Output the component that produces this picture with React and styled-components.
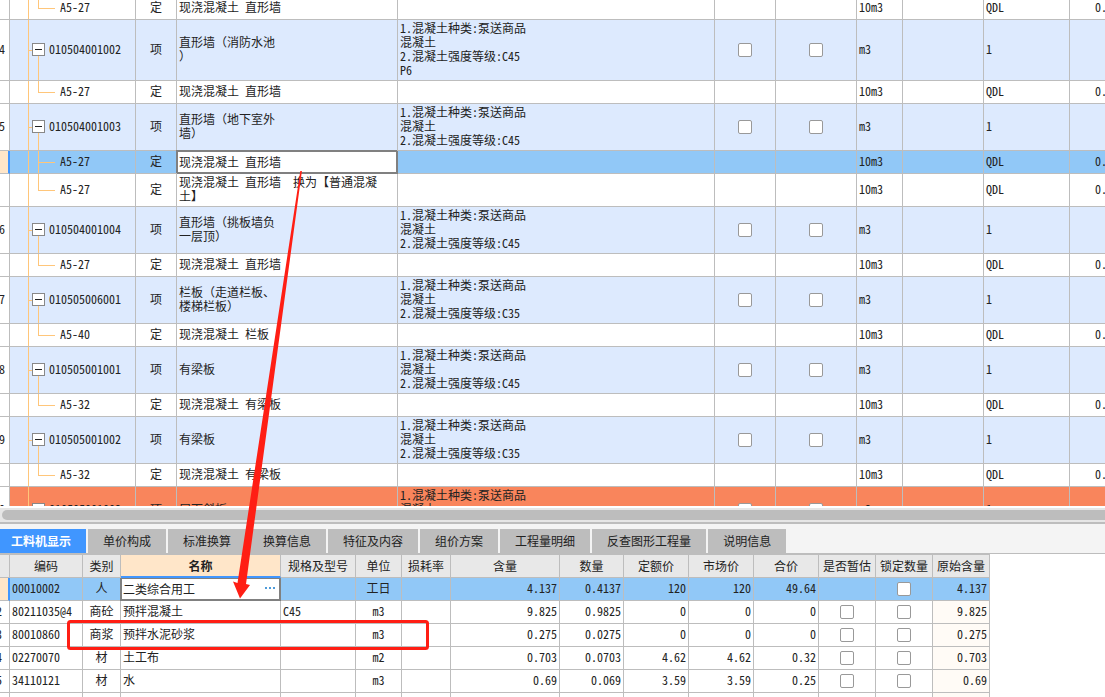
import React from 'react'
import styled, { createGlobalStyle, css } from 'styled-components'

const line = '#bdbdbd'
const ink = '#222222'
const accent = '#4096ff'
const selected = '#91c8f7'
const peach = '#ffe6c9'
const branch = '#ffc67a'

const GlobalStyle = createGlobalStyle`
* {
    box-sizing: border-box;
}
body {
    margin: 0;
    background: #fff;
    overflow: hidden;
}
body, button, input {
    font-family: "Noto Sans CJK SC", sans-serif;
    font-size: 12px;
    line-height: 14px;
    color: ${ink};
}
`

const Page = styled.div`
position: relative;
display: flex;
flex-direction: column;
height: 100vh;
overflow: hidden;
`

const BillPane = styled.main`
flex: 1;
min-height: 0;
overflow: hidden;
`

const Grid = styled.table`
table-layout: fixed;
border-collapse: separate;
border-spacing: 0;
font-feature-settings: "hwid" 1;
text-spacing-trim: space-all;
`

const BillGrid = styled(Grid)`
width: 100%;
margin-top: -3px;
`

const Col = styled.col`
width: ${(p) => (p.$w ? p.$w + 'px' : 'auto')};
`

const Cell = styled.td`
padding: 0 2px 2px 2px;
border-right: 1px solid ${line};
border-bottom: 1px solid ${line};
text-align: ${(p) => p.$align || 'left'};
vertical-align: middle;
white-space: pre;
overflow: hidden;
${(p) => p.$tint && css`
    background: #fffbf6;
`}
`

const CheckCell = styled(Cell)`
padding: 0;
`

const EdgeCell = styled(Cell)`
padding: 0 0 2px 25px;
border-right: 0;
`

// brackets stay full width while the latin text is half width
const Wide = styled.span`
font-feature-settings: normal;
`

const IndexCell = styled.th`
padding: 0 0 2px;
border-right: 1px solid ${line};
border-bottom: 1px solid ${line};
background: #fff;
font-weight: normal;
text-align: left;
text-indent: ${(p) => (p.$cut ? '-4px' : '-1px')};
white-space: nowrap;
overflow: hidden;
${(p) => p.$active && css`
    background: ${peach};
    border-right: 2px solid ${accent};
`}
`

const rowColors = {
    item: '#ddeafe',
    quota: '#ffffff',
    active: selected,
    warn: '#f9855c',
}

const BillRow = styled.tr`
background: ${(p) => rowColors[p.$kind]};
& > * {
    height: ${(p) => (p.$lines > 1 ? p.$lines * 14 + 5 : 23)}px;
}
`

const EditCell = styled(Cell)`
padding: 0 5px 2px 2px;
background: #fff;
overflow: visible;
border-color: #808080;
box-shadow: -1px -1px 0 #808080, inset 1px 1px 0 #808080, inset -1px -1px 0 #808080;
${(p) => p.$underHead && css`
    box-shadow: -1px 0 0 #808080, inset 1px 1px 0 #808080, inset -1px -1px 0 #808080;
`}
`

const EditBox = styled.div`
display: flex;
align-items: center;
`

const EditInput = styled.input`
flex: 1;
min-width: 0;
height: 16px;
padding: 0;
border: 0;
outline: 0;
background: transparent;
font-feature-settings: "hwid" 1;
`

const MoreButton = styled.button`
display: flex;
gap: 2px;
padding: 4px 0;
border: 0;
background: transparent;
i {
    width: 2px;
    height: 2px;
    background: #4f9bd9;
}
`

const TreeCell = styled(Cell)`
padding: 0;
`

const Tree = styled.div`
display: flex;
align-items: center;
height: ${(p) => (p.$lines > 1 ? p.$lines * 14 + 4 : 22)}px;
`

const Rail = styled.span`
width: 19px;
height: 100%;
border-right: 1px solid ${branch};
`

const Stub = styled.span`
width: 3px;
height: 1px;
background: ${branch};
`

const Node = styled.span`
display: flex;
flex-direction: column;
align-items: center;
height: 100%;
margin-right: 4px;
`

const NodeLine = styled.span`
flex: 1 1 ${(p) => (p.$on ? '1px' : '0px')};
width: 1px;
background: ${(p) => (p.$on ? branch : 'transparent')};
`

const Toggle = styled.button`
display: flex;
align-items: center;
justify-content: center;
width: 13px;
height: 13px;
padding: 0;
border: 1px solid #888;
background: #fff;
&::before {
    content: '';
    width: 7px;
    height: 1px;
    background: #222;
}
`

const Elbow = styled.span`
display: flex;
flex-direction: column;
width: 17px;
height: 100%;
margin-left: 9px;
margin-right: 5px;
&::before {
    content: '';
    flex: 1;
    border-left: 1px solid ${branch};
    border-bottom: 1px solid ${branch};
}
&::after {
    content: '';
    flex: 1;
    border-left: 1px solid ${(p) => (p.$last ? 'transparent' : branch)};
}
`

const Code = styled.span`
padding-bottom: 2px;
`

const Check = styled.input`
appearance: none;
display: block;
width: 14px;
height: 14px;
margin: 0 auto;
border: 1px solid #999;
border-radius: 2px;
background: #fff;
`

const ScrollTrack = styled.div`
padding: 2px 0 2px 2px;
margin-top: 2px;
background: #e6e6e6;
`

const ScrollThumb = styled.div`
height: 10px;
border-radius: 5px 0 0 5px;
background: ${line};
`

const Dock = styled.section`
height: 175px;
border-top: 2px solid ${line};
overflow: hidden;
`

const TabBar = styled.nav`
display: flex;
align-items: flex-end;
gap: 2px;
height: 30px;
background: #f4f4f4;
border-bottom: 1px solid ${line};
`

const Tab = styled.button`
height: 24px;
padding: 0 15px;
border: 0;
background: ${line};
white-space: nowrap;
${(p) => p.$active && css`
    padding-left: 11px;
    background: ${accent};
    color: #fff;
    font-weight: bold;
`}
`

const ResourceGrid = styled(Grid)`
width: 990px;
border-top: 1px solid ${line};
`

const HeadCell = styled.th`
height: 23px;
padding: 0;
border-right: 1px solid ${line};
border-bottom: 1px solid ${line};
background: #e8e8e8;
font-weight: normal;
white-space: nowrap;
${(p) => p.$active && css`
    background: ${peach};
    border-bottom: 2px solid ${accent};
    font-weight: bold;
`}
`

const Marks = styled.svg`
position: absolute;
top: 0;
left: 0;
pointer-events: none;
`

const concrete = (grade) => `1.混凝土种类:泵送商品\n混凝土\n2.混凝土强度等级:${grade}`

const billCols = [10, 126, 41, 221, 317, 61, 81, 46, 81, 86, 0]

const bill = [
    { kind: 'quota', code: 'A5-27', name: '现浇混凝土 直形墙', last: true },
    { kind: 'item', no: '4', code: '010504001002', name: '直形墙（消防水池\n）', desc: concrete('C45\nP6'), lines: 4 },
    { kind: 'quota', code: 'A5-27', name: '现浇混凝土 直形墙', last: true },
    { kind: 'item', no: '5', code: '010504001003', name: '直形墙（地下室外\n墙）', desc: concrete('C45'), lines: 3 },
    { kind: 'active', code: 'A5-27', name: '现浇混凝土 直形墙' },
    { kind: 'quota', code: 'A5-27', name: '现浇混凝土 直形墙  换为【普通混凝\n土】', last: true, lines: 2 },
    { kind: 'item', no: '6', code: '010504001004', name: '直形墙（挑板墙负\n一层顶）', desc: concrete('C45'), lines: 3 },
    { kind: 'quota', code: 'A5-27', name: '现浇混凝土 直形墙', last: true },
    { kind: 'item', no: '7', code: '010505006001', name: '栏板（走道栏板、\n楼梯栏板）', desc: concrete('C35'), lines: 3 },
    { kind: 'quota', code: 'A5-40', name: '现浇混凝土 栏板', last: true },
    { kind: 'item', no: '8', code: '010505001001', name: '有梁板', desc: concrete('C45'), lines: 3 },
    { kind: 'quota', code: 'A5-32', name: '现浇混凝土 有梁板', last: true },
    { kind: 'item', no: '9', code: '010505001002', name: '有梁板', desc: concrete('C35'), lines: 3 },
    { kind: 'quota', code: 'A5-32', name: '现浇混凝土 有梁板', last: true },
    { kind: 'warn', no: '0', code: '010505001003', name: '屋面斜板', desc: concrete('C35'), lines: 3 },
]

const tabs = ['工料机显示', '单价构成', '标准换算', '换算信息', '特征及内容', '组价方案', '工程量明细', '反查图形工程量', '说明信息']

const resCols = [10, 73, 38, 160, 75, 46, 49, 109, 64, 65, 65, 65, 57, 57, 57]

const heads = ['', '编码', '类别', '名称', '规格及型号', '单位', '损耗率', '含量', '数量', '定额价', '市场价', '合价', '是否暂估', '锁定数量', '原始含量']

const resources = [
    { code: '00010002', type: '人', name: '二类综合用工', unit: '工日', nums: ['4.137', '0.4137', '120', '120', '49.64'], origin: '4.137', active: true },
    { no: '2', code: '80211035@4', type: '商砼', name: '预拌混凝土', spec: 'C45', unit: 'm3', nums: ['9.825', '0.9825', '0', '0', '0'], origin: '9.825' },
    { no: '3', code: '80010860', type: '商浆', name: '预拌水泥砂浆', unit: 'm3', nums: ['0.275', '0.0275', '0', '0', '0'], origin: '0.275' },
    { no: '4', code: '02270070', type: '材', name: '土工布', unit: 'm2', nums: ['0.703', '0.0703', '4.62', '4.62', '0.32'], origin: '0.703' },
    { no: '5', code: '34110121', type: '材', name: '水', unit: 'm3', nums: ['0.69', '0.069', '3.59', '3.59', '0.25'], origin: '0.69' },
]

function Name({ text }) {
    return text.split(/([（）])/).map((part, i) => (
        i % 2 ? <Wide key={i}>{part}</Wide> : part
    ))
}

function BillLine({ row }) {
    const isItem = row.kind === 'item' || row.kind === 'warn'
    const lines = row.lines || 1
    return (
        <BillRow $kind={row.kind} $lines={lines}>
            <IndexCell scope="row" $active={row.kind === 'active'}>{row.no}</IndexCell>
            <TreeCell>
                <Tree $lines={lines}>
                    <Rail />
                    {isItem ? (
                        <>
                            <Stub />
                            <Node>
                                <NodeLine />
                                <Toggle aria-label={'收起 ' + row.code} />
                                <NodeLine $on />
                            </Node>
                        </>
                    ) : (
                        <Elbow $last={row.last} />
                    )}
                    <Code>{row.code}</Code>
                </Tree>
            </TreeCell>
            <Cell $align="center">{isItem ? '项' : '定'}</Cell>
            {row.kind === 'active' ? (
                <EditCell>
                    <EditBox>
                        <EditInput aria-label="名称" defaultValue={row.name} />
                    </EditBox>
                </EditCell>
            ) : (
                <Cell><Name text={row.name} /></Cell>
            )}
            <Cell>{row.desc}</Cell>
            <CheckCell>{isItem && <Check type="checkbox" aria-label={row.code + ' 选项一'} />}</CheckCell>
            <CheckCell>{isItem && <Check type="checkbox" aria-label={row.code + ' 选项二'} />}</CheckCell>
            <Cell>{isItem ? 'm3' : '10m3'}</Cell>
            <Cell />
            <Cell>{isItem ? '1' : 'QDL'}</Cell>
            <EdgeCell>{isItem ? '' : '0.'}</EdgeCell>
        </BillRow>
    )
}

function ResourceLine({ row }) {
    return (
        <BillRow $kind={row.active ? 'active' : 'quota'}>
            <IndexCell scope="row" $cut $active={row.active}>{row.no}</IndexCell>
            <Cell>{row.code}</Cell>
            <Cell $align="center">{row.type}</Cell>
            {row.active ? (
                <EditCell $underHead>
                    <EditBox>
                        <EditInput aria-label="名称" defaultValue={row.name} />
                        <MoreButton aria-label="更多"><i /><i /><i /></MoreButton>
                    </EditBox>
                </EditCell>
            ) : (
                <Cell>{row.name}</Cell>
            )}
            <Cell>{row.spec}</Cell>
            <Cell $align="center">{row.unit}</Cell>
            <Cell />
            {row.nums.map((n, i) => (
                <Cell key={i} $align="right">{n}</Cell>
            ))}
            <CheckCell>{!row.active && <Check type="checkbox" aria-label={row.name + ' 是否暂估'} />}</CheckCell>
            <CheckCell><Check type="checkbox" aria-label={row.name + ' 锁定数量'} /></CheckCell>
            <Cell $align="right" $tint={!row.active}>{row.origin}</Cell>
        </BillRow>
    )
}

function App() {
    return (
        <>
            <GlobalStyle />
            <Page>
                <BillPane>
                    <BillGrid>
                        <colgroup>
                            {billCols.map((w, i) => <Col key={i} $w={w} />)}
                        </colgroup>
                        <tbody>
                            {bill.map((row, i) => <BillLine key={i} row={row} />)}
                        </tbody>
                    </BillGrid>
                </BillPane>
                <ScrollTrack>
                    <ScrollThumb />
                </ScrollTrack>
                <Dock>
                    <TabBar>
                        {tabs.map((t, i) => <Tab key={t} $active={i === 0}>{t}</Tab>)}
                    </TabBar>
                    <ResourceGrid>
                        <colgroup>
                            {resCols.map((w, i) => <Col key={i} $w={w} />)}
                        </colgroup>
                        <thead>
                            <tr>
                                {heads.map((h, i) => <HeadCell key={i} $active={h === '名称'}>{h}</HeadCell>)}
                            </tr>
                        </thead>
                        <tbody>
                            {resources.map((row) => <ResourceLine key={row.code} row={row} />)}
                            <BillRow $kind="quota">
                                <IndexCell scope="row" />
                                {resCols.slice(1).map((w, i) => <Cell key={i} $tint={i === 13} />)}
                            </BillRow>
                        </tbody>
                    </ResourceGrid>
                </Dock>
                <Marks width="440" height="697" viewBox="0 0 440 697" aria-hidden="true">
                    <path d="M300.3 171 L301.9 171 L246 584 L250 585 L240 598.5 L233 581.5 L237.5 583 Z" fill="#ff1e14" />
                    <rect x="68.5" y="621.5" width="359" height="27" rx="2" fill="none" stroke="#ff1e14" strokeWidth="3" />
                </Marks>
            </Page>
        </>
    )
}

export default App
